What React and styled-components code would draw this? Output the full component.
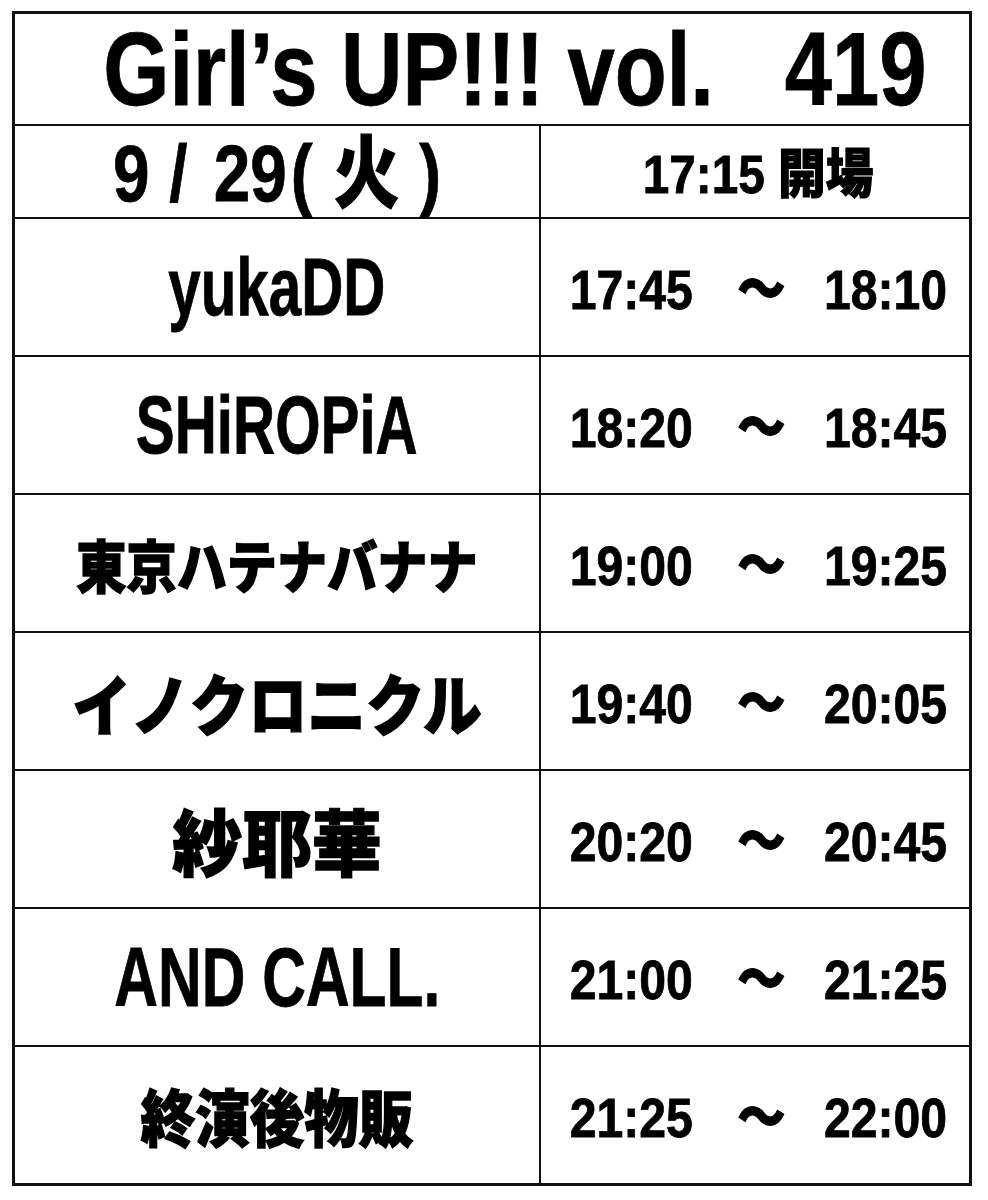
import React from "react";
import styled, { createGlobalStyle } from "styled-components";

const GlobalStyle = createGlobalStyle`
  html, body {
    margin: 0;
    padding: 0;
    background: #fff;
  }
  body {
    font-family: "Liberation Sans", "Noto Sans CJK JP", sans-serif;
    color: #000;
  }
`;

const acts = [
  { name: "yukaDD", size: 81, sx: 0.72, start: "17:45", end: "18:10" },
  { name: "SHiROPiA", size: 81, sx: 0.72, start: "18:20", end: "18:45" },
  { name: "東京ハテナバナナ", jp: true, size: 57, sx: 0.88, start: "19:00", end: "19:25" },
  { name: "イノクロニクル", jp: true, size: 66, sx: 0.89, start: "19:40", end: "20:05" },
  { name: "紗耶華", jp: true, size: 72, sx: 0.97, start: "20:20", end: "20:45" },
  { name: "AND CALL.", size: 84, sx: 0.72, start: "21:00", end: "21:25" },
  { name: "終演後物販", jp: true, size: 62, sx: 0.88, start: "21:25", end: "22:00" },
];

const Board = styled.div`
  box-sizing: border-box;
  width: 960px;
  margin: 11px 0 0 12px;
  border: 3px solid #111;
  background: #fff;
`;

const TitleRow = styled.div`
  height: 110px;
  display: flex;
  align-items: center;
  justify-content: center;
  padding-left: 46px;
`;

const Row = styled.div`
  display: grid;
  grid-template-columns: 526px 1fr;
  height: ${(p) => p.$h}px;
  border-top: 2px solid #111;
`;

const Cell = styled.div`
  box-sizing: border-box;
  display: flex;
  align-items: center;
  justify-content: center;
  min-width: 0;
  padding-bottom: ${(p) => p.$lift || 0}px;
  padding-left: ${(p) => p.$shift || 0}px;
  border-right: ${(p) => (p.$divider ? "2px solid #111" : "none")};
`;

const Squeeze = styled.span`
  display: inline-block;
  white-space: pre;
  line-height: 1;
  font-family: ${(p) =>
    p.$jp
      ? '"Noto Sans CJK JP", sans-serif'
      : '"Liberation Sans", "Noto Sans CJK JP", sans-serif'};
  font-weight: ${(p) => (p.$jp ? 900 : 700)};
  font-size: ${(p) => p.$size}px;
  -webkit-text-stroke: ${(p) => (p.$jp ? 1.4 : 0.8)}px #000;
  transform: scaleX(${(p) => p.$sx});
`;

const Jp = styled.span`
  font-family: "Noto Sans CJK JP", sans-serif;
  font-weight: 900;
  -webkit-text-stroke: 1.2px #000;
  margin-left: ${(p) => p.$ml || 0}px;
  margin-right: ${(p) => p.$mr || 0}px;
`;

const Glyph = styled.span`
  margin-left: ${(p) => p.$ml || 0}px;
  margin-right: ${(p) => p.$mr || 0}px;
`;

export default function App() {
  return (
    <>
      <GlobalStyle />
      <Board>
        <TitleRow>
          <Squeeze $size={103} $sx={0.825}>
            {"Girl’s UP!!! vol.   419"}
          </Squeeze>
        </TitleRow>
        <Row $h={91}>
          <Cell $divider $lift={4}>
            <Squeeze $size={80} $sx={0.82}>
              9<Glyph $ml={24} $mr={32}>/</Glyph>29
              <Glyph $ml={5}>(</Glyph>
              <Jp $ml={26}>火</Jp>
              <Glyph $ml={24}>)</Glyph>
            </Squeeze>
          </Cell>
          <Cell $shift={6}>
            <Squeeze $size={53} $sx={0.9}>
              17:15 <Jp>開場</Jp>
            </Squeeze>
          </Cell>
        </Row>
        {acts.map((a) => (
          <Row key={a.name} $h={136}>
            <Cell $divider>
              <Squeeze $jp={a.jp} $size={a.size} $sx={a.sx}>
                {a.name}
              </Squeeze>
            </Cell>
            <Cell $shift={6}>
              <Squeeze $size={56} $sx={0.86}>
                {a.start}
                {"   "}
                <Jp $ml={5} $mr={-2}>～</Jp>
                {"   "}
                {a.end}
              </Squeeze>
            </Cell>
          </Row>
        ))}
      </Board>
    </>
  );
}
